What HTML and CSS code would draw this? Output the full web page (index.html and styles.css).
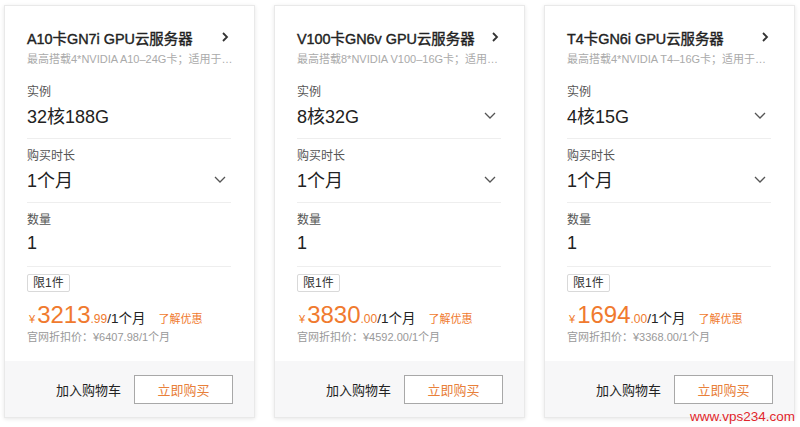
FILE: index.html
```html
<!DOCTYPE html>
<html lang="zh-CN">
<head>
<meta charset="utf-8">
<title>GPU云服务器</title>
<link rel="stylesheet" href="styles.css">
</head>
<body>
<div class="page">
  <div class="card">
    <div class="head">
      <div class="title-row">
        <span class="title">A10卡GN7i GPU云服务器</span>
        <svg class="arrow-r" width="8" height="12" viewBox="0 0 8 12"><path d="M2 2 L6 6 L2 10" fill="none" stroke="#333" stroke-width="1.8"/></svg>
      </div>
      <div class="sub">最高搭载4*NVIDIA A10–24G卡；适用于…</div>
    </div>
    <div class="body">
      <div class="sec">
        <div class="label">实例</div>
        <div class="value"><span>32核188G</span></div>
      </div>
      <div class="sec">
        <div class="label">购买时长</div>
        <div class="value"><span>1个月</span><svg class="arrow-d" width="12" height="7" viewBox="0 0 12 7"><path d="M1 1 L6 6 L11 1" fill="none" stroke="#555" stroke-width="1.3"/></svg></div>
      </div>
      <div class="sec">
        <div class="label">数量</div>
        <div class="value"><span>1</span></div>
      </div>
      <div class="badge">限1件</div>
      <div class="price"><span class="yen">¥</span><span class="big">3213</span><span class="dec">.99</span><span class="per">/1个月</span><span class="promo">了解优惠</span></div>
      <div class="orig">官网折扣价：¥6407.98/1个月</div>
    </div>
    <div class="foot">
      <span class="cart">加入购物车</span>
      <span class="buy">立即购买</span>
    </div>
  </div>

  <div class="card">
    <div class="head">
      <div class="title-row">
        <span class="title">V100卡GN6v GPU云服务器</span>
        <svg class="arrow-r" width="8" height="12" viewBox="0 0 8 12"><path d="M2 2 L6 6 L2 10" fill="none" stroke="#333" stroke-width="1.8"/></svg>
      </div>
      <div class="sub">最高搭载8*NVIDIA V100–16G卡；适用…</div>
    </div>
    <div class="body">
      <div class="sec">
        <div class="label">实例</div>
        <div class="value"><span>8核32G</span><svg class="arrow-d" width="12" height="7" viewBox="0 0 12 7"><path d="M1 1 L6 6 L11 1" fill="none" stroke="#555" stroke-width="1.3"/></svg></div>
      </div>
      <div class="sec">
        <div class="label">购买时长</div>
        <div class="value"><span>1个月</span><svg class="arrow-d" width="12" height="7" viewBox="0 0 12 7"><path d="M1 1 L6 6 L11 1" fill="none" stroke="#555" stroke-width="1.3"/></svg></div>
      </div>
      <div class="sec">
        <div class="label">数量</div>
        <div class="value"><span>1</span></div>
      </div>
      <div class="badge">限1件</div>
      <div class="price"><span class="yen">¥</span><span class="big">3830</span><span class="dec">.00</span><span class="per">/1个月</span><span class="promo">了解优惠</span></div>
      <div class="orig">官网折扣价：¥4592.00/1个月</div>
    </div>
    <div class="foot">
      <span class="cart">加入购物车</span>
      <span class="buy">立即购买</span>
    </div>
  </div>

  <div class="card">
    <div class="head">
      <div class="title-row">
        <span class="title">T4卡GN6i GPU云服务器</span>
        <svg class="arrow-r" width="8" height="12" viewBox="0 0 8 12"><path d="M2 2 L6 6 L2 10" fill="none" stroke="#333" stroke-width="1.8"/></svg>
      </div>
      <div class="sub">最高搭载4*NVIDIA T4–16G卡；适用于…</div>
    </div>
    <div class="body">
      <div class="sec">
        <div class="label">实例</div>
        <div class="value"><span>4核15G</span><svg class="arrow-d" width="12" height="7" viewBox="0 0 12 7"><path d="M1 1 L6 6 L11 1" fill="none" stroke="#555" stroke-width="1.3"/></svg></div>
      </div>
      <div class="sec">
        <div class="label">购买时长</div>
        <div class="value"><span>1个月</span><svg class="arrow-d" width="12" height="7" viewBox="0 0 12 7"><path d="M1 1 L6 6 L11 1" fill="none" stroke="#555" stroke-width="1.3"/></svg></div>
      </div>
      <div class="sec">
        <div class="label">数量</div>
        <div class="value"><span>1</span></div>
      </div>
      <div class="badge">限1件</div>
      <div class="price"><span class="yen">¥</span><span class="big">1694</span><span class="dec">.00</span><span class="per">/1个月</span><span class="promo">了解优惠</span></div>
      <div class="orig">官网折扣价：¥3368.00/1个月</div>
    </div>
    <div class="foot">
      <span class="cart">加入购物车</span>
      <span class="buy">立即购买</span>
    </div>
  </div>
  <div class="watermark">www.vps234.com</div>
</div>
</body>
</html>
```

FILE: styles.css
```css
* { box-sizing: border-box; }
html, body { margin: 0; padding: 0; background: #fff; }
body {
  font-family: "Liberation Sans", "Noto Sans CJK SC", sans-serif;
  color: #222;
}
.page {
  position: relative;
  width: 800px;
  height: 427px;
  padding: 5px 0 0 4px;
  display: flex;
  gap: 19px;
  align-items: flex-start;
}
.card {
  width: 251px;
  height: 413px;
  border: 1px solid #e9e9e9;
  background: #fff;
  box-shadow: 0 1px 4px rgba(0,0,0,0.10);
  display: flex;
  flex-direction: column;
}
.head { padding: 21px 23px 8px 22px; }
.title-row {
  display: flex;
  justify-content: space-between;
  align-items: center;
  height: 20px;
}
.title {
  font-size: 14.4px;
  font-weight: normal;
  -webkit-text-stroke: 0.4px #222;
  color: #222;
  white-space: nowrap;
}
.arrow-r { margin-right: 2px; }
.sub {
  margin-top: 4px;
  font-size: 11px;
  line-height: 16px;
  color: #aaa;
  white-space: nowrap;
}
.body { padding: 0 23px 0 22px; }
.sec {
  padding: 9px 0 11px;
  border-bottom: 1px solid #eeeeee;
}
.label {
  font-size: 12px;
  line-height: 16px;
  color: #555;
}
.value {
  margin-top: 3px;
  height: 24px;
  display: flex;
  justify-content: space-between;
  align-items: center;
  font-size: 18px;
  color: #222;
}
.arrow-d { margin-right: 5px; }
.badge {
  display: inline-block;
  margin-top: 7px;
  height: 18px;
  padding: 0 5px;
  border: 1px solid #d9d9d9;
  border-radius: 2px;
  font-size: 12px;
  line-height: 16px;
  color: #333;
}
.price {
  margin-top: 9px;
  height: 28px;
  line-height: 28px;
  white-space: nowrap;
  color: #f07a2e;
}
.yen { font-size: 11px; margin: 0 2px 0 2px; }
.big { font-size: 24px; }
.dec { font-size: 12px; }
.per { font-size: 13.5px; color: #222; }
.promo { font-size: 11px; margin-left: 13px; }
.orig {
  font-size: 11px;
  line-height: 16px;
  color: #999;
  white-space: nowrap;
}
.foot {
  margin-top: auto;
  height: 56px;
  background: #f7f7f8;
  display: flex;
  justify-content: flex-end;
  align-items: center;
  gap: 13px;
  padding: 0 21px 0 0;
}
.cart { font-size: 13px; color: #222; }
.buy {
  width: 99px;
  height: 29px;
  border: 1px solid #a8a8a8;
  background: #fff;
  color: #e8803a;
  font-size: 13px;
  display: flex;
  align-items: center;
  justify-content: center;
}
.watermark {
  position: absolute;
  right: 5px;
  bottom: 3px;
  font-family: "Liberation Sans", sans-serif;
  font-size: 13.5px;
  color: #e0262c;
  text-shadow: 0 0 2px #fff;
}
```
